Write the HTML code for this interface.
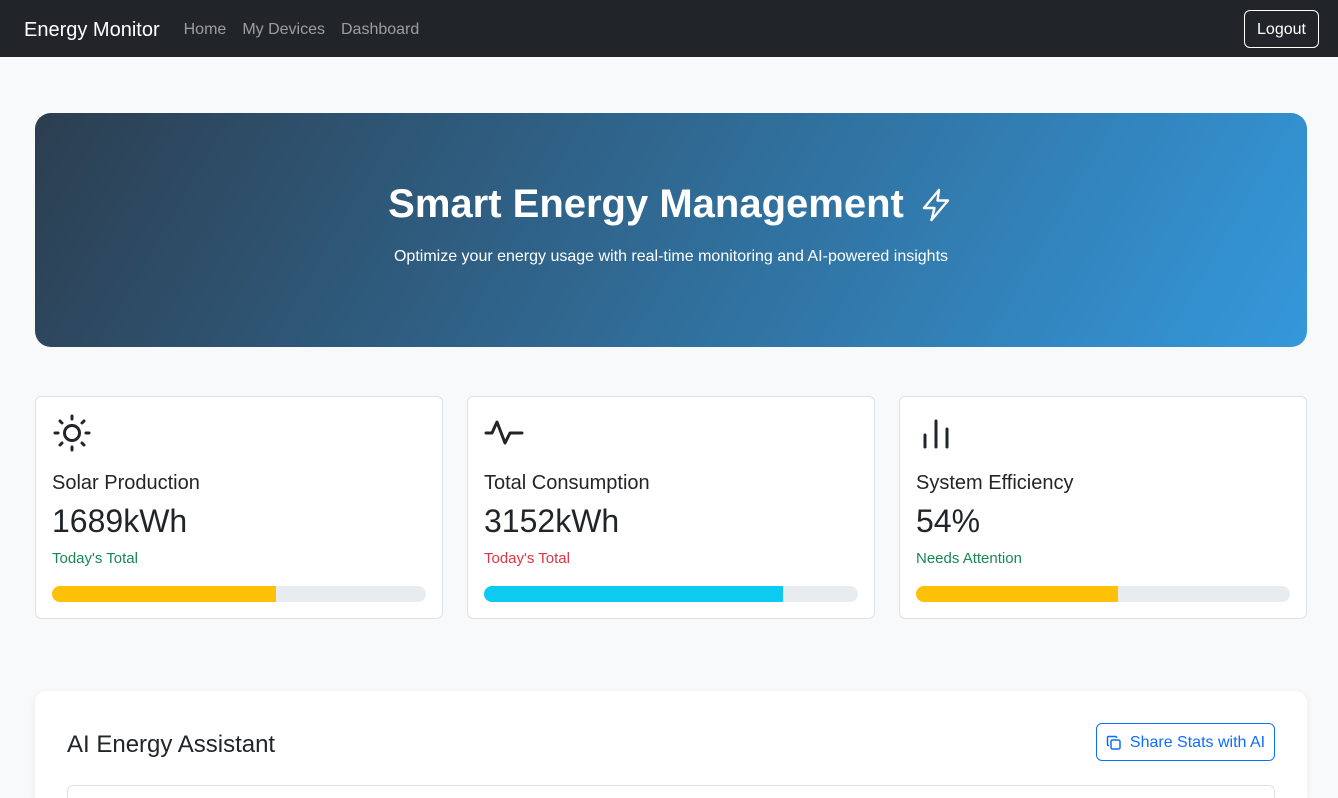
<!DOCTYPE html>
<html><head><meta charset="utf-8"><style>
*{box-sizing:border-box;margin:0;padding:0}
html,body{width:1338px;height:798px;overflow:hidden}
body{background:#f8f9fa;font-family:"Liberation Sans",sans-serif;color:#212529;position:relative}
.nav{height:57px;background:#212529;display:flex;align-items:center;padding:3px 24px 0;position:relative}
.brand{color:#fff;font-size:20px;margin-right:24px}
.nav a{color:rgba(255,255,255,.55);font-size:16px;margin-right:16px;text-decoration:none}
.logout{position:absolute;right:19px;top:10px;width:75px;height:38px;border:1px solid #fff;border-radius:6px;color:#fff;font-size:16px;display:flex;align-items:center;justify-content:center;padding-top:2px}
.hero{position:absolute;left:35px;top:113px;width:1272px;height:234px;border-radius:16px;background:linear-gradient(120deg,#2c3e50,#3498db);color:#fff;text-align:center}
.hero h1{font-size:40px;font-weight:bold;margin-top:69px;display:flex;justify-content:center;align-items:center;gap:14px}
.hero p{font-size:16px;margin-top:21px}
.card{position:absolute;top:396px;width:408px;height:223px;background:#fff;border:1px solid #dee2e6;border-radius:6px;padding:16px}
.card .t{font-size:20px;margin-top:14px}
.card .v{font-size:32px;font-weight:500;margin-top:8px}
.card .s{font-size:15px;margin-top:10px}
.bar{position:absolute;left:16px;right:16px;top:189px;height:16px;background:#e9ecef;border-radius:8px;overflow:hidden}
.bar div{height:100%}
.ai{position:absolute;left:35px;top:691px;width:1272px;height:107px;background:#fff;border-radius:12px 12px 0 0;box-shadow:0 2px 8px rgba(0,0,0,.06);overflow:hidden}
.ai h2{position:absolute;left:32px;top:40px;font-size:24px;font-weight:500}
.btn{position:absolute;right:32px;top:32px;width:179px;height:38px;border:1px solid #0d6efd;border-radius:6px;color:#0d6efd;font-size:16px;display:flex;align-items:center;justify-content:center;gap:8px;padding-top:2px}
.box{position:absolute;left:32px;right:32px;top:94px;height:40px;border:1px solid #dee2e6;border-radius:6px}
</style></head><body>
<div class="nav"><span class="brand">Energy Monitor</span><a>Home</a><a>My Devices</a><a>Dashboard</a><div class="logout">Logout</div></div>
<div class="hero"><h1>Smart Energy Management <svg width="36" height="38" viewBox="0 0 24 24" fill="none" stroke="#fff" stroke-width="1.6" stroke-linejoin="round"><path d="M14 2L4 14h7l-2 8 11-13h-7l1-7z"/></svg></h1><p>Optimize your energy usage with real-time monitoring and AI-powered insights</p></div>

<div class="card" style="left:35px"><svg width="40" height="40" viewBox="0 0 40 40" fill="none" stroke="#212529" stroke-width="3" stroke-linecap="round"><circle cx="20" cy="20" r="7.5"/><path d="M20 3v3M20 34v3M3 20h3M34 20h3M8 8l2 2M30 30l2 2M32 8l-2 2M8 32l2-2"/></svg>
<div class="t">Solar Production</div><div class="v">1689kWh</div><div class="s" style="color:#198754">Today's Total</div><div class="bar"><div style="width:60%;background:#ffc107"></div></div></div>

<div class="card" style="left:467px"><svg width="40" height="40" viewBox="0 0 40 40" fill="none" stroke="#212529" stroke-width="3" stroke-linejoin="round" stroke-linecap="round"><path d="M2 20h6l5-11 8 21 5-10h12"/></svg>
<div class="t">Total Consumption</div><div class="v">3152kWh</div><div class="s" style="color:#dc3545">Today's Total</div><div class="bar"><div style="width:80%;background:#0dcaf0"></div></div></div>

<div class="card" style="left:899px"><svg width="40" height="40" viewBox="0 0 40 40" fill="none" stroke="#212529" stroke-width="3" stroke-linecap="round"><path d="M9 34V22M20 34V8M31 34V16"/></svg>
<div class="t">System Efficiency</div><div class="v">54%</div><div class="s" style="color:#198754">Needs Attention</div><div class="bar"><div style="width:54%;background:#ffc107"></div></div></div>

<div class="ai"><h2>AI Energy Assistant</h2><div class="btn"><svg width="16" height="16" viewBox="0 0 16 16" fill="none" stroke="#0d6efd" stroke-width="1.5"><rect x="5" y="5" width="9" height="9" rx="1.5"/><path d="M3 10.5H2.5A1 1 0 0 1 1.5 9.5V2.5A1 1 0 0 1 2.5 1.5h7a1 1 0 0 1 1 1V3"/></svg>Share Stats with AI</div><div class="box"></div></div>
</body></html>
